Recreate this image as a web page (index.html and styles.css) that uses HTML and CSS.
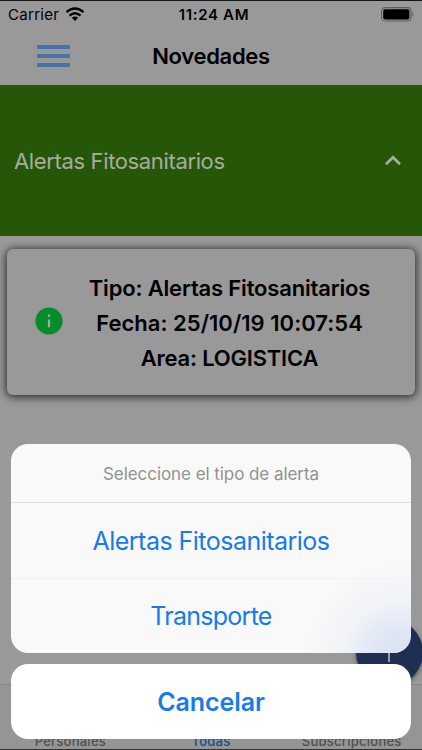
FILE: index.html
```html
<!DOCTYPE html>
<html lang="es">
<head>
<meta charset="utf-8">
<title>Novedades</title>
<link rel="stylesheet" href="styles.css">
</head>
<body>
<div class="screen">
  <header class="status">
    <div class="carrier"><span class="carrier-name">Carrier</span>
      <svg class="wifi" width="20" height="15" viewBox="0 0 20 15" fill="none" stroke="#000" stroke-width="2.4"><path d="M1.5 5.2Q10-2 18.500 5.200"/><path d="M4.500 8.600Q10 4.100 15.500 8.600"/><path d="M6.800 10.700Q10 8.300 13.200 10.700L10 13.900Z" fill="#000" stroke="none"/></svg>
    </div>
    <span class="time">11:24 AM</span>
    <svg class="battery" width="34" height="15" viewBox="0 0 34 15"><rect x=".6" y=".6" width="29.400" height="13.400" rx="3.500" fill="none" stroke="#5e5e5e" stroke-width="1.100"/><rect x="2.200" y="2.200" width="26.200" height="10.200" rx="1.800"/><path d="M31.300 5Q33.600 7.300 31.300 9.600Z" fill="#5e5e5e"/></svg>
  </header>
  <nav class="navbar">
    <div class="menu"><i></i><i></i><i></i></div>
    <h1>Novedades</h1>
  </nav>
  <section class="group">
    <span class="group-name">Alertas Fitosanitarios</span>
    <svg width="16" height="11" viewBox="0 0 16 11" fill="none" stroke="#a5ad9f" stroke-width="2.700"><path d="M1 9.200L8 2.200L15 9.200"/></svg>
  </section>
  <main class="content">
    <article class="card">
      <svg class="info" width="28" height="28" viewBox="0 0 28 28"><circle cx="14" cy="14" r="13.600" fill="#078c2c"/><path d="M12.900 12.600h2.200v7.600h-2.200zM12.900 7.400h2.200v2.300h-2.200z" fill="#91b499"/></svg>
      <div class="details">
        <p class="tipo">Tipo: Alertas Fitosanitarios</p>
        <p class="fecha">Fecha: 25/10/19 10:07:54</p>
        <p class="area">Area: LOGISTICA</p>
      </div>
    </article>
  </main>
  <footer class="tabs">
    <span class="tab personales">Personales</span>
    <span class="tab todas">Todas</span>
    <span class="tab subs">Subscripciones</span>
  </footer>
  <div class="fab"><svg width="18" height="20" viewBox="0 0 18 20" stroke="#9a9da5" stroke-width="2"><path d="M9 0v19M0 9h18"/></svg></div>
  <div class="sheet">
    <div class="options">
      <div class="sheet-title"><span>Seleccione el tipo de alerta</span></div>
      <div class="option"><span class="opt-alertas">Alertas Fitosanitarios</span></div>
      <div class="option"><span class="opt-transporte">Transporte</span></div>
    </div>
    <div class="cancel"><span>Cancelar</span></div>
  </div>
</div>
</body>
</html>
```
FILE: styles.css
```css
* { box-sizing: border-box; }
body { margin: 0; font-family: Inter, "Liberation Sans", sans-serif; }
h1, p { margin: 0; }
span, p, h1 { white-space: nowrap; }
svg { display: block; flex: none; }
.screen {
  position: relative; width: 422px; height: 750px; overflow: hidden;
  display: flex; flex-direction: column; background: #999;
  border-top: 1px solid #151515; border-bottom: 1px solid #333;
}
.status {
  height: 28px; padding: 0 7px 0 8px;
  display: grid; grid-template-columns: 1fr auto 1fr; align-items: center;
  font-size: 15px; color: #000;
}
.carrier { display: flex; align-items: center; gap: 6px; margin-top: -2px; }
.carrier-name { letter-spacing: .3px; }
.time { font-weight: 600; letter-spacing: .65px; margin: -1px 0 0 5px; }
.battery { justify-self: end; margin-top: -2px; }
.navbar { height: 56px; padding-bottom: 2px; display: grid; grid-template-columns: 106px 1fr 106px; align-items: center; }
.menu { display: grid; gap: 5px; width: 33px; margin-left: 37px; }
.menu i { height: 4px; background: #4873a8; border-radius: 1px; }
h1 { font-size: 22px; font-weight: 600; line-height: 28px; text-align: center; letter-spacing: -.3px; }
.group {
  height: 151px; padding: 0 21px 0 14px; background: #265709; color: #a5ad9f;
  display: flex; align-items: center; justify-content: space-between; font-size: 22px;
}
.group-name { letter-spacing: -.36px; }
.content { flex: 1; padding: 13px 7px 0; }
.card {
  height: 146px; padding-left: 28px; border-radius: 6px; background: #999;
  box-shadow: 0 1px 9px 1px rgba(0, 0, 0, .75);
  display: flex; align-items: center;
}
.info { margin-top: -2px; }
.details { width: 334px; margin-left: -.5px; padding-top: 3px; font-size: 22px; font-weight: 600; line-height: 34.7px; text-align: center; }
.tipo { letter-spacing: -.17px; }
.fecha { letter-spacing: .03px; }
.area { letter-spacing: -.2px; }
.tabs {
  height: 65px; border-top: 1px solid #858585; background: #959595;
  display: grid; grid-template-columns: repeat(3, 1fr); align-items: end; justify-items: center;
  font-size: 13px; font-weight: 500; line-height: 16px; color: #505050; letter-spacing: .25px;
}
.todas { color: #164f90; }
.fab {
  position: absolute; left: 355.500px; top: 618px; width: 67px; height: 67px; border-radius: 50%;
  background: #1f2e53; box-shadow: 0 2px 4px rgba(0, 0, 0, .45);
  display: flex; align-items: center; justify-content: center;
}
.sheet { position: absolute; left: 11px; right: 11px; top: 443px; text-align: center; color: #167bed; }
.options {
  height: 209px; border-radius: 17px; overflow: hidden;
  background: radial-gradient(circle at 388px 212px, #d9e3f4 0, #dfe6f5 25px, #f0f3f8 55px, #f9f9f9 95px);
}
.sheet-title { height: 59px; border-bottom: 1px solid #dfdfe0; color: #929292; font-size: 17px; line-height: 60px; letter-spacing: -.06px; }
.option { height: 75px; font-size: 25px; line-height: 76px; }
.option + .option { border-top: 1px solid #f0f1f3; line-height: 75px; }
.opt-alertas { letter-spacing: -.52px; }
.opt-transporte { letter-spacing: -.74px; }
.cancel { height: 75px; margin-top: 11px; border-radius: 17px; background: #fff; font-size: 25px; font-weight: 600; line-height: 76px; letter-spacing: -.1px; }
```
